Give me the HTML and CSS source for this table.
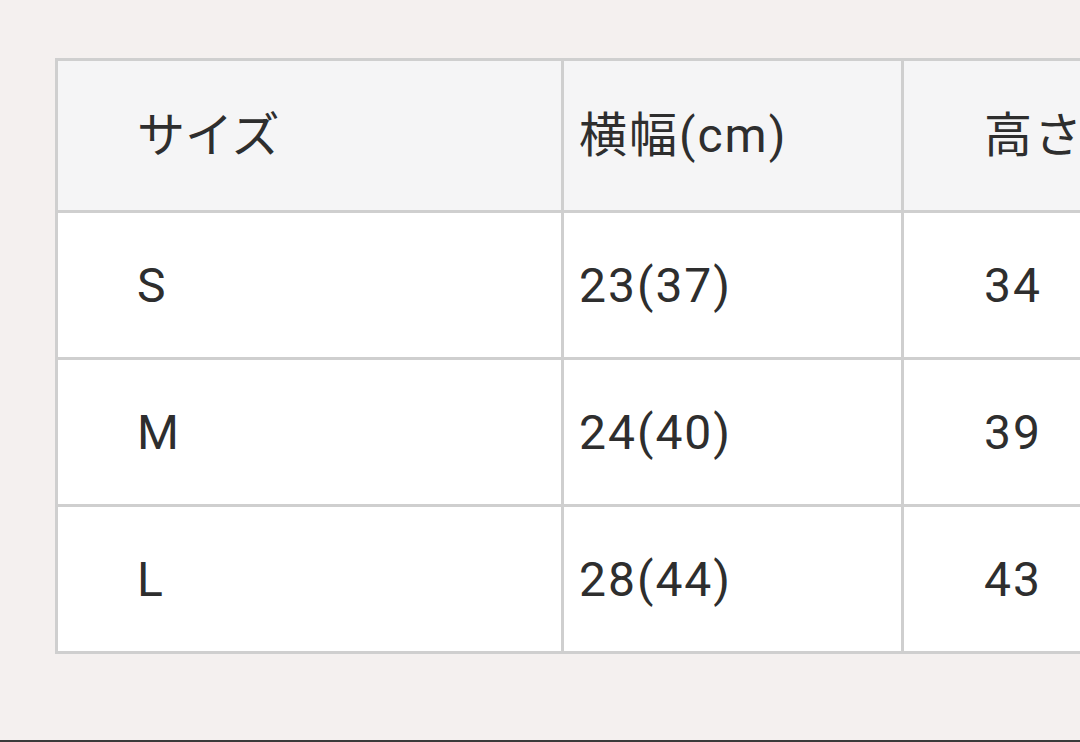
FILE: index.html
```html
<!DOCTYPE html>
<html lang="ja">
<head>
<meta charset="utf-8">
<link rel="stylesheet" href="styles.css">
</head>
<body>
<div class="page">
  <div class="size-table">
    <div class="cell head c1">サイズ</div>
    <div class="cell head c2">横幅(cm)</div>
    <div class="cell head c3">高さ(cm)</div>
    <div class="cell c1">S</div>
    <div class="cell c2">23(37)</div>
    <div class="cell c3">34</div>
    <div class="cell c1">M</div>
    <div class="cell c2">24(40)</div>
    <div class="cell c3">39</div>
    <div class="cell c1">L</div>
    <div class="cell c2">28(44)</div>
    <div class="cell c3">43</div>
  </div>
</div>
<div class="bottom-line"></div>
</body>
</html>
```
FILE: styles.css
```css
html, body {
  margin: 0;
  padding: 0;
  width: 1080px;
  height: 742px;
  overflow: hidden;
  background: #f4f0ef;
}
.page {
  height: 740px;
  padding: 58px 0 0 55px;
  box-sizing: border-box;
}
.size-table {
  display: grid;
  grid-template-columns: 503px 337px 320px;
  grid-template-rows: 149px 144px 144px 144px;
  gap: 3px;
  padding: 3px;
  width: max-content;
  background: #cfcfcf;
  font-family: Roboto, "Noto Sans CJK JP", sans-serif;
  font-size: 48px;
  letter-spacing: 2px;
  color: #2e2e2e;
}
.cell {
  background: #ffffff;
  display: flex;
  align-items: center;
  white-space: nowrap;
  overflow: hidden;
}
.cell.head {
  background: #f5f5f6;
  padding-bottom: 9px;
  box-sizing: border-box;
}
.c1 { padding-left: 79px; }
.c2 { padding-left: 15px; }
.c3 { padding-left: 80px; }
.head.c1 { letter-spacing: 0; }
.bottom-line {
  height: 2px;
  background: #3a3a3a;
}
```
